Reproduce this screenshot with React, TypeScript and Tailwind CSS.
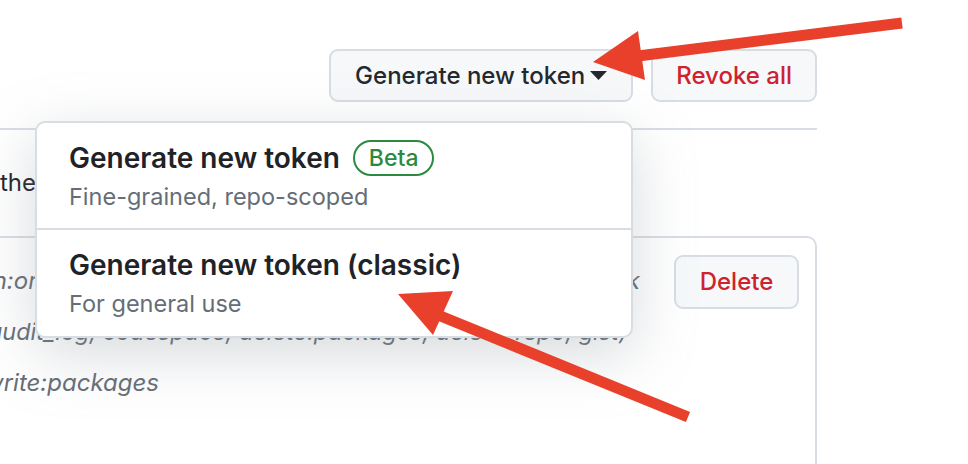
import * as React from "react";

function Caret() {
  return (
    <svg width="17" height="9" viewBox="0 0 17 9" className="ml-[5px]">
      <path d="M0 0h17L8.5 9z" fill="#24292f" />
    </svg>
  );
}

function Arrows() {
  return (
    <svg className="absolute inset-0 pointer-events-none" width="968" height="464" viewBox="0 0 968 464">
      <line x1="630" y1="57" x2="902" y2="23" stroke="#e8402a" strokeWidth="11" />
      <polygon points="593,62 638,31 645,80" fill="#e8402a" />
      <line x1="438" y1="315" x2="688" y2="417" stroke="#e8402a" strokeWidth="11" />
      <polygon points="398,294 453,291 433,335" fill="#e8402a" />
    </svg>
  );
}

export default function App() {
  return (
    <div
      className="relative w-[968px] h-[464px] overflow-hidden bg-white"
      style={{ fontFamily: "Inter, 'Noto Sans', sans-serif" }}
    >
      <div className="w-[817px]">
        {/* top actions */}
        <div className="flex justify-end gap-[18px] pt-[49px] pb-[26px]">
          <button className="flex items-center h-[53px] px-[24px] rounded-[9px] border-2 border-[#d8dde3] bg-[#f6f8fa] text-[24px] leading-[30px] font-medium text-[#24292f]">
            Generate new token
            <Caret />
          </button>
          <button className="h-[53px] px-[23px] rounded-[9px] border-2 border-[#d8dde3] bg-[#f6f8fa] text-[24px] leading-[30px] font-medium text-[#cf222e]">
            Revoke all
          </button>
        </div>

        <div className="border-t-2 border-[#d8dde3] h-[108px] flex items-center">
          <p className="text-[24px] text-[#1f2328] whitespace-nowrap">the GitHub API.</p>
        </div>

        {/* token box */}
        <div className="-ml-[12px] h-[240px] border-2 border-[#d8dde3] rounded-tr-[10px] flex pt-[17px] pr-[16px]">
          <div className="flex-1 italic text-[24px] text-[#656d76] whitespace-nowrap overflow-hidden">
            <p className="h-[52px] flex items-center justify-end pr-[34px]">admin:org, admin:enterprise, admin:gpg_key, admin:org_hook</p>
            <p className="h-[50px] flex items-center -ml-[2px] text-[23.4px]">audit_log, codespace, delete:packages, delete_repo, gist)</p>
            <p className="h-[52px] flex items-center -ml-[6px]">write:packages</p>
          </div>
          <button className="h-[54px] w-[125px] rounded-[9px] border-2 border-[#d8dde3] bg-[#f6f8fa] text-[24px] font-medium text-[#cf222e]">
            Delete
          </button>
        </div>
      </div>

      {/* dropdown menu */}
      <div className="absolute left-[35px] top-[121px] w-[598px] rounded-[10px] border-2 border-[#d8dde3] bg-white shadow-[0_16px_60px_rgba(140,149,159,0.35)]">
        <div className="h-[107px] pl-[32px] pt-[17px] border-b-2 border-[#d8dde3]">
          <div className="flex items-center gap-[13px] h-[36px]">
            <span className="text-[28px] leading-[34px] font-semibold text-[#1f2328]">Generate new token</span>
            <span className="h-[36px] px-[14px] flex items-center rounded-full border-2 border-[#2c8a3f] text-[23px] font-medium text-[#2c8a3f]">
              Beta
            </span>
          </div>
          <p className="mt-[6px] text-[23.5px] leading-[30px] text-[#656d76]">Fine-grained, repo-scoped</p>
        </div>
        <div className="h-[106px] pl-[32px] pt-[18px]">
          <p className="text-[28px] leading-[34px] font-semibold text-[#1f2328]">Generate new token (classic)</p>
          <p className="mt-[7px] text-[23.5px] leading-[30px] text-[#656d76]">For general use</p>
        </div>
      </div>

      <Arrows />
    </div>
  );
}
